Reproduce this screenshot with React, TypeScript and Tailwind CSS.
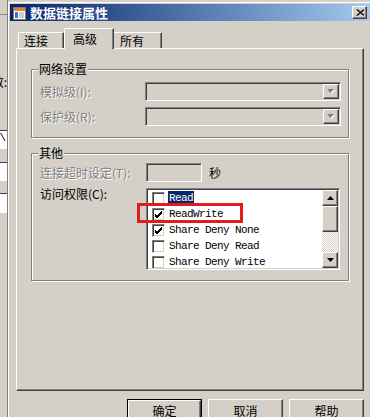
import React from 'react';

const raised =
  'border border-t-white border-l-white border-r-[#404040] border-b-[#404040] shadow-[inset_-1px_-1px_0_#808080]';
const sunken =
  'border border-t-[#808080] border-l-[#808080] border-r-white border-b-white shadow-[inset_1px_1px_0_#404040,inset_-1px_-1px_0_#D4D0C8]';
const disabled = 'text-[#808080] [text-shadow:1px_1px_0_#fff]';

const items = [
  { label: 'Read', checked: false, selected: true },
  { label: 'ReadWrite', checked: true, selected: false },
  { label: 'Share Deny None', checked: true, selected: false },
  { label: 'Share Deny Read', checked: false, selected: false },
  { label: 'Share Deny Write', checked: false, selected: false },
];

const GroupBox: React.FC<{ title: string; className?: string; children: React.ReactNode }> = ({
  title,
  className,
  children,
}) => (
  <div className={`relative border border-[#808080] shadow-[1px_1px_0_#fff,inset_1px_1px_0_#fff] ${className ?? ''}`}>
    <span className="absolute -top-[8px] left-[6px] bg-[#D4D0C8] px-[1px] leading-[14px]">{title}</span>
    {children}
  </div>
);

const Combo = () => (
  <div className={`w-[196px] h-[19px] flex justify-end p-[1px] ${sunken}`}>
    <div className={`w-[16px] flex items-center justify-center ${raised}`}>
      <svg width="8" height="5" viewBox="0 0 8 5">
        <path d="M1 1h7L4.5 5z" fill="#fff" />
        <path d="M0 0h7L3.5 4z" fill="#808080" />
      </svg>
    </div>
  </div>
);

const Arrow = ({ up }: { up?: boolean }) => (
  <div className={`h-[16px] flex items-center justify-center bg-[#D4D0C8] ${raised}`}>
    <svg width="7" height="4" viewBox="0 0 7 4">
      <path d={up ? 'M3.5 0L7 4H0z' : 'M0 0h7L3.5 4z'} fill="#000" />
    </svg>
  </div>
);

const CheckBox = ({ checked }: { checked: boolean }) => (
  <div className={`w-[13px] h-[13px] bg-white flex items-center justify-center ${sunken}`}>
    {checked && (
      <svg width="7" height="7" viewBox="0 0 7 7">
        <path d="M0 3l2 2 5-5M0 4l2 2 5-5M0 5l2 2 5-5" stroke="#000" strokeWidth="1" fill="none" />
      </svg>
    )}
  </div>
);

const Button: React.FC<{ label: string; isDefault?: boolean }> = ({ label, isDefault }) => (
  <div className={`w-[75px] h-[23px] ${isDefault ? 'border border-black' : ''}`}>
    <div className={`h-full flex items-center justify-center leading-[14px] ${raised}`}>{label}</div>
  </div>
);

export default function App() {
  return (
    <div className="relative w-[370px] h-[417px] overflow-hidden flex bg-[#D4D0C8] text-black text-[12px] font-['Noto_Sans_CJK_SC',sans-serif]">
      {/* window behind */}
      <div className="w-[8px] shrink-0 flex flex-col overflow-hidden border-r border-[#808080]">
        <div className="h-[14px] shrink-0" />
        <div className="h-[1px] shrink-0 bg-[#808080]" />
        <div className="h-[60px] shrink-0" />
        <div className="flex justify-end leading-[14px] whitespace-nowrap">数:</div>
        <div className="h-[41px] shrink-0" />
        <div className="h-[19px] shrink-0 bg-white border-t border-[#404040] flex justify-end pr-[1px] text-[11px] leading-[14px] font-['Liberation_Mono',monospace]">\</div>
        <div className="h-[13px] shrink-0" />
        <div className="h-[19px] shrink-0 bg-white border-t border-[#404040]" />
        <div className="h-[12px] shrink-0" />
        <div className="h-[20px] shrink-0 bg-white border-t border-[#404040]" />
      </div>

      {/* dialog */}
      <div className="flex-1 flex flex-col mt-[2px] pt-[1px] pl-[1px] border-t border-l border-white">
        <div className="h-[17px] flex items-center bg-linear-to-r from-[#0A246A] to-[#A6CAF0] pl-[2px] pr-[3px]">
          <svg width="16" height="16" viewBox="0 0 16 16" className="shrink-0">
            <rect x="1.5" y="2.5" width="12" height="12" fill="#fff" stroke="#7a7a7a" />
            <rect x="2" y="3" width="11" height="3" fill="#e8803a" />
            <rect x="3" y="7" width="3" height="6" fill="#4a70c0" />
            <path d="M7 8h5M7 10h5M7 12h5" stroke="#9a9a9a" />
          </svg>
          <span className="ml-[2px] text-white font-bold text-[13px] leading-[17px]">数据链接属性</span>
          <div className={`ml-auto w-[15px] h-[13px] bg-[#D4D0C8] flex items-center justify-center ${raised}`}>
            <svg width="8" height="7" viewBox="0 0 8 7">
              <path d="M0.5 0.5l7 6M7.5 0.5l-7 6M1.5 0.5l7 6M8.5 0.5l-7 6" stroke="#000" fill="none" />
            </svg>
          </div>
        </div>

        <div className="flex flex-col pl-[6px] pr-[6px] mt-[7px]">
          {/* tabs */}
          <div className="relative z-10 flex items-end h-[20px] pl-[2px]">
            <div className="w-[46px] h-[16px] pl-[5px] leading-[15px] border-t border-l border-white border-r border-r-[#404040] shadow-[inset_-1px_0_0_#808080] rounded-tl-[2px]">
              连接
            </div>
            <div className="w-[50px] h-[21px] -mb-[1px] pl-[8px] pt-[2px] leading-[15px] bg-[#D4D0C8] border-t border-l border-white border-r border-r-[#404040] shadow-[inset_-1px_0_0_#808080] rounded-tl-[2px]">
              高级
            </div>
            <div className="w-[48px] h-[16px] pl-[6px] leading-[15px] border-t border-white border-r border-r-[#404040] shadow-[inset_-1px_0_0_#808080]">
              所有
            </div>
          </div>

          {/* panel */}
          <div className="h-[343px] flex flex-col pt-[20px] pl-[14px] pr-[14px] border-t border-l border-white border-r border-b border-r-[#404040] border-b-[#404040] shadow-[inset_-1px_-1px_0_#808080]">
            <GroupBox title="网络设置" className="h-[69px] pt-[12px] pl-[8px] flex flex-col gap-[6px]">
              <div className="flex items-center h-[19px]">
                <span className={`w-[105px] leading-[14px] ${disabled}`}>模拟级(I):</span>
                <Combo />
              </div>
              <div className="flex items-center h-[19px]">
                <span className={`w-[105px] leading-[14px] ${disabled}`}>保护级(R):</span>
                <Combo />
              </div>
            </GroupBox>

            <GroupBox title="其他" className="mt-[15px] h-[128px] pt-[9px] pl-[8px] flex flex-col gap-[6px]">
              <div className="flex items-center h-[19px]">
                <span className={`w-[106px] leading-[14px] ${disabled}`}>连接超时设定(T):</span>
                <div className={`w-[56px] h-[19px] ${sunken}`} />
                <span className="ml-[7px] leading-[14px]">秒</span>
              </div>
              <div className="flex items-start">
                <span className="w-[106px] leading-[14px] mt-[-1px]">访问权限(C):</span>
                <div className={`w-[194px] h-[82px] flex bg-white p-[1px] ${sunken}`}>
                  <div className="flex-1 flex flex-col overflow-hidden">
                    {items.map((it) => (
                      <div key={it.label} className="h-[16px] shrink-0 flex items-center pl-[4px]">
                        <CheckBox checked={it.checked} />
                        <span
                          className={`ml-[3px] px-[1px] whitespace-pre font-['Liberation_Mono',monospace] text-[11px] tracking-[-0.6px] leading-[15px] ${
                            it.selected ? 'bg-[#0A246A] text-white' : ''
                          }`}
                        >
                          {it.label}
                        </span>
                      </div>
                    ))}
                  </div>
                  <div className="w-[16px] flex flex-col">
                    <Arrow up />
                    <div className={`h-[26px] bg-[#D4D0C8] ${raised}`} />
                    <div className="flex-1 bg-[repeating-conic-gradient(#fff_0_25%,#D4D0C8_0_50%)] bg-[length:2px_2px]" />
                    <Arrow />
                  </div>
                </div>
              </div>
            </GroupBox>
          </div>

          {/* buttons */}
          <div className="flex justify-end gap-[6px] mt-[8px]">
            <Button label="确定" isDefault />
            <Button label="取消" />
            <Button label="帮助" />
          </div>
        </div>
      </div>

      {/* red annotation */}
      <div className="absolute left-[137px] top-[203px] w-[106px] h-[20px] border-[3px] border-[#E41B1B]" />
    </div>
  );
}
